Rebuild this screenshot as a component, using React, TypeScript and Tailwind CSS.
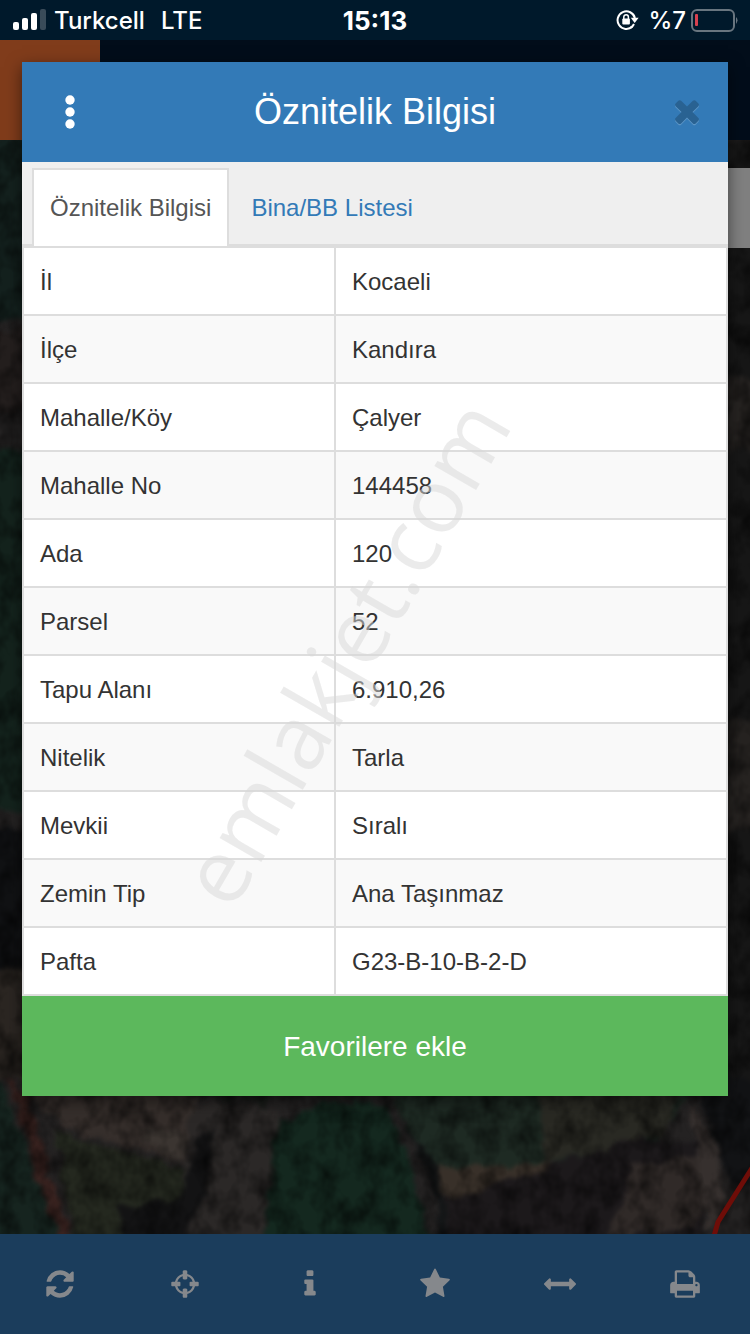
import { useState } from 'react';

const rows = [
  { label: 'İl', value: 'Kocaeli' },
  { label: 'İlçe', value: 'Kandıra' },
  { label: 'Mahalle/Köy', value: 'Çalyer' },
  { label: 'Mahalle No', value: '144458' },
  { label: 'Ada', value: '120' },
  { label: 'Parsel', value: '52' },
  { label: 'Tapu Alanı', value: '6.910,26' },
  { label: 'Nitelik', value: 'Tarla' },
  { label: 'Mevkii', value: 'Sıralı' },
  { label: 'Zemin Tip', value: 'Ana Taşınmaz' },
  { label: 'Pafta', value: 'G23-B-10-B-2-D' },
];

const tabs = ['Öznitelik Bilgisi', 'Bina/BB Listesi'];

const tools = [
  {
    label: 'Yenile',
    path: 'M1639 1056q0 5-1 7-64 268-268 434.5t-478 166.5q-146 0-282.5-55t-243.5-157l-129 129q-19 19-45 19t-45-19-19-45v-448q0-26 19-45t45-19h448q26 0 45 19t19 45-19 45l-137 137q71 66 161 102t187 36q134 0 250-65t186-179q11-17 53-117 8-23 30-23h192q13 0 22.5 9.5t9.5 22.5zm25-800v448q0 26-19 45t-45 19h-448q-26 0-45-19t-19-45 19-45l138-138q-148-137-349-137-134 0-250 65t-186 179q-11 17-53 117-8 23-30 23h-199q-13 0-22.5-9.5t-9.5-22.5v-7q65-268 270-434.5t480-166.5q146 0 284 55.5t245 156.5l130-129q19-19 45-19t45 19 19 45z',
  },
  {
    label: 'Konumum',
    path: 'M1325 1024h-109q-26 0-45-19t-19-45v-128q0-26 19-45t45-19h109q-32-108-112.5-188.5t-188.5-112.5v109q0 26-19 45t-45 19h-128q-26 0-45-19t-19-45v-109q-108 32-188.5 112.5t-112.5 188.5h109q26 0 45 19t19 45v128q0 26-19 45t-45 19h-109q32 108 112.5 188.5t188.5 112.5v-109q0-26 19-45t45-19h128q26 0 45 19t19 45v109q108-32 188.5-112.5t112.5-188.5zm339-192v128q0 26-19 45t-45 19h-143q-37 161-154.5 278.5t-278.5 154.5v143q0 26-19 45t-45 19h-128q-26 0-45-19t-19-45v-143q-161-37-278.5-154.5t-154.5-278.5h-143q-26 0-45-19t-19-45v-128q0-26 19-45t45-19h143q37-161 154.5-278.5t278.5-154.5v-143q0-26 19-45t45-19h128q26 0 45 19t19 45v143q161 37 278.5 154.5t154.5 278.5h143q26 0 45 19t19 45z',
  },
  {
    label: 'Bilgi',
    path: 'M1216 1344v128q0 26-19 45t-45 19h-512q-26 0-45-19t-19-45v-128q0-26 19-45t45-19h64v-384h-64q-26 0-45-19t-19-45v-128q0-26 19-45t45-19h384q26 0 45 19t19 45v576h64q26 0 45 19t19 45zm-128-1152v192q0 26-19 45t-45 19h-256q-26 0-45-19t-19-45v-192q0-26 19-45t45-19h256q26 0 45 19t19 45z',
  },
  {
    label: 'Favoriler',
    path: 'M1728 647q0 22-26 48l-363 354 86 500q1 7 1 20 0 21-10.5 35.5t-30.5 14.5q-19 0-40-12l-449-236-449 236q-22 12-40 12-21 0-31.5-14.5t-10.5-35.5q0-6 2-20l86-500-364-354q-25-27-25-48 0-37 56-46l502-73 225-455q19-41 49-41t49 41l225 455 502 73q56 9 56 46z',
  },
  {
    label: 'Ölçüm',
    path: 'M1792 896q0 26-19 45l-256 256q-19 19-45 19t-45-19-19-45v-128h-1024v128q0 26-19 45t-45 19-45-19l-256-256q-19-19-19-45t19-45l256-256q19-19 45-19t45 19 19 45v128h1024v-128q0-26 19-45t45-19 45 19l256 256q19 19 19 45z',
  },
  {
    label: 'Yazdır',
    path: 'M448 1536h896v-256h-896v256zm0-640h896v-384h-160q-40 0-68-28t-28-68v-160h-640v640zm1152 64q0-26-19-45t-45-19-45 19-19 45 19 45 45 19 45-19 19-45zm128 0v416q0 13-9.5 22.5t-22.5 9.5h-224v160q0 40-28 68t-68 28h-960q-40 0-68-28t-28-68v-160h-224q-13 0-22.5-9.5t-9.5-22.5v-416q0-79 56.5-135.5t135.5-56.5h64v-544q0-40 28-68t68-28h672q40 0 88 20t76 48l152 152q28 28 48 76t20 88v256h64q79 0 135.5 56.5t56.5 135.5z',
  },
];

const closePath =
  'M1490 1322q0 40-28 68l-136 136q-28 28-68 28t-68-28l-294-294-294 294q-28 28-68 28t-68-28l-136-136q-28-28-28-68t28-68l294-294-294-294q-28-28-28-68t28-68l136-136q28-28 68-28t68 28l294 294 294-294q28-28 68-28t68 28l136 136q28 28 28 68t-28 68l-294 294 294 294q28 28 28 68z';

function StatusBar() {
  return (
    <div className="grid h-10 grid-cols-3 items-center bg-[#00192b] px-3 font-[Inter,sans-serif] text-2xl text-white">
      <div className="flex items-center gap-2 font-medium">
        <svg width="34" height="22" viewBox="0 0 34 22" fill="#fff">
          <rect x="1" y="13" width="6" height="8" rx="2" />
          <rect x="10" y="9" width="6" height="12" rx="2" />
          <rect x="19" y="4" width="6" height="17" rx="2" />
          <rect x="28" y="0" width="6" height="21" rx="2" fill="#394b59" />
        </svg>
        <span className="pt-[2px]">Turkcell</span>
        <span className="ml-2 pt-[2px]">LTE</span>
      </div>
      <div className="pt-[2px] text-center text-[26px] leading-8 font-bold">15:13</div>
      <div className="flex items-center justify-end gap-1 font-medium">
        <svg className="mr-1" width="24" height="22" viewBox="0 0 24 22">
          <path d="M16.4 17.6A8.8 8.8 0 1 1 18.9 9" fill="none" stroke="#fff" strokeWidth="2" />
          <path d="M14.5 18.8A8.8 8.8 0 0 0 18 15" fill="none" stroke="#fff" strokeWidth="2" />
          <path d="M14.8 8.8h7.8L18.7 14z" fill="#fff" />
          <rect x="6.3" y="9.5" width="7.6" height="6" rx="1" fill="#fff" />
          <path d="M7.8 10V8a2.3 2.3 0 0 1 4.6 0v2" fill="none" stroke="#fff" strokeWidth="1.5" />
        </svg>
        <span className="pt-[2px]">%7</span>
        <svg width="48" height="24" viewBox="0 0 48 24">
          <rect x="2" y="2" width="42" height="21" rx="5" fill="none" stroke="#68757f" strokeWidth="2" />
          <rect x="5" y="6" width="3" height="12" rx="1" fill="#d8414f" />
          <path d="M46 9q3 3 0 7z" fill="#68757f" />
        </svg>
      </div>
    </div>
  );
}

// Dimmed aerial view behind the dialog
function MapView() {
  return (
    <svg
      className="absolute inset-0 h-full w-full"
      viewBox="0 140 750 1094"
      preserveAspectRatio="xMidYMax slice"
      aria-hidden="true"
    >
      <defs>
        <filter id="soft" x="-5%" y="-5%" width="110%" height="110%" colorInterpolationFilters="sRGB">
          <feTurbulence type="fractalNoise" baseFrequency="0.06" numOctaves="3" seed="4" result="n" />
          <feDisplacementMap in="SourceGraphic" in2="n" scale="16" xChannelSelector="R" yChannelSelector="G" />
          <feGaussianBlur stdDeviation="2" />
        </filter>
        <filter id="grain" colorInterpolationFilters="sRGB">
          <feTurbulence type="fractalNoise" baseFrequency="0.05 0.04" numOctaves="3" seed="8" />
          <feColorMatrix values="0 0 0 0 0  0 0 0 0 0  0 0 0 0 0  1.6 0 0 0 -0.6" />
        </filter>
      </defs>
      <rect y="140" width="750" height="1094" fill="#242222" />
      <g filter="url(#soft)">
        <path d="M-20 140h60v180h-60z" fill="#14211e" />
        <path d="M-20 330h60v80h-60z" fill="#241f1e" />
        <path d="M-20 450h60v360h-60z" fill="#14231d" />
        <path d="M-20 830h60v140h-60z" fill="#111214" />
        <path d="M-20 970h60v110h-60z" fill="#2b2622" />
        <path d="M710 140h60v1000h-60z" fill="#171717" />
        <path d="M715 380h55v70h-55zM715 720h55v110h-55z" fill="#262321" />
        <path d="M-20 1070l20 10 60 164h-80z" fill="#16241f" />
        <path d="M20 1085h180l-4 80-130-36z" fill="#352e2b" />
        <path d="M55 1130l135 42-12 72H76z" fill="#24281f" />
        <path d="M8 1080l18 10 46 154H58z" fill="#38221f" />
        <path d="M145 1125l60 14-12 28-50-24z" fill="#3b3531" />
        <path d="M190 1120l20-20 70 10-18 134h-84z" fill="#2b2827" />
        <path d="M278 1120l50-18h60l46 142H262z" fill="#14281f" />
        <path d="M385 1085h310l-40 60-110 30H430z" fill="#1e2a23" />
        <path d="M540 1090l145-6-20 50-120 30z" fill="#292923" />
        <path d="M430 1168l160-6-70 34h-78z" fill="#383029" />
        <path d="M440 1200l190-60 80 0-10 104H442z" fill="#1c191b" />
        <path d="M632 1165l70-10 14 30-20 40-90 14z" fill="#302a28" />
        <path d="M690 1100l30 50 5 60-18 24-10-80z" fill="#36302e" />
        <path d="M694 1080h76v104h-38l-14-40z" fill="#121315" />
        <path d="M120 1205l60-5 22-70h12l-8 60-22 54h-60z" fill="#131314" />
        <path d="M400 1120l18 30 20 48-2 46h14l-8-70z" fill="#141617" />
        <path d="M190 1086h80v24l-20-10-60-4z" fill="#171a17" />
      </g>
      <rect y="140" width="750" height="1094" filter="url(#grain)" opacity="0.7" />
      <path d="M752 1168l-34 54-4 14" fill="none" stroke="#6e0d08" strokeWidth="5" />
    </svg>
  );
}

function Toolbar() {
  return (
    <nav className="flex h-[100px] items-center justify-between bg-[#1b3d5c] pr-[5px]">
      {tools.map((tool) => (
        <button
          key={tool.label}
          type="button"
          aria-label={tool.label}
          className="flex h-full w-[120px] items-center justify-center text-[#85888c]"
        >
          <svg width="32" height="32" viewBox="0 0 1792 1792" fill="currentColor">
            <path d={tool.path} />
          </svg>
        </button>
      ))}
    </nav>
  );
}

function AttributeDialog() {
  const [active, setActive] = useState(0);

  return (
    <section
      role="dialog"
      aria-labelledby="dialog-title"
      className="relative overflow-hidden bg-white shadow-[0_5px_15px_rgba(0,0,0,0.5)]"
    >
      <header className="flex h-[100px] items-center justify-between bg-[#337ab7] px-3 text-white">
        <button type="button" aria-label="Menü" className="flex w-[72px] justify-center">
          <svg width="12" height="36" viewBox="0 0 12 36" fill="currentColor">
            <circle cx="6" cy="6" r="4.7" />
            <circle cx="6" cy="18" r="4.7" />
            <circle cx="6" cy="30" r="4.7" />
          </svg>
        </button>
        <h1 id="dialog-title" className="text-4xl">
          Öznitelik Bilgisi
        </h1>
        <button type="button" aria-label="Kapat" className="flex w-[72px] justify-end pr-[11px] text-[#296292]">
          <svg width="36" height="36" viewBox="0 60 1792 1792" fill="currentColor">
            <path d={closePath} transform="translate(0 60)" fill="#5c95c5" />
            <path d={closePath} />
          </svg>
        </button>
      </header>

      <div role="tablist" className="flex border-b-2 border-[#ddd] bg-[#efefef] px-[10px] pt-[6px]">
        {tabs.map((tab, index) => (
          <button
            key={tab}
            type="button"
            role="tab"
            aria-selected={active === index}
            onClick={() => setActive(index)}
            className={
              active === index
                ? '-mb-[2px] mr-1 h-[78px] border-2 border-b-0 border-[#ddd] bg-white px-4 text-[#555]'
                : '-mb-[2px] mr-1 h-[78px] border-2 border-b-0 border-transparent px-4 text-[#337ab7]'
            }
          >
            {tab}
          </button>
        ))}
      </div>

      <table className="w-full table-fixed border-collapse text-[#333]">
        <colgroup>
          <col className="w-[312px]" />
          <col />
        </colgroup>
        <tbody>
          {rows.map((row) => (
            <tr key={row.label} className="h-[68px] odd:bg-white even:bg-[#f9f9f9]">
              <th scope="row" className="border-2 border-[#ddd] px-4 pt-[2px] text-left font-normal">
                {row.label}
              </th>
              <td className="border-2 border-[#ddd] px-4 pt-[2px]">{row.value}</td>
            </tr>
          ))}
        </tbody>
      </table>

      <button type="button" className="h-[100px] w-full bg-[#5cb85c] pt-[2px] text-[28px] text-white">
        Favorilere ekle
      </button>

      {/* Watermark */}
      <div className="pointer-events-none absolute inset-0 flex items-center justify-center pt-36 pr-16">
        <span className="-rotate-60 font-['Open_Sans',sans-serif] text-[90px] text-[#d9d9d9] opacity-50">
          emlakjet.com
        </span>
      </div>
    </section>
  );
}

export default function App() {
  return (
    <div className="grid min-h-screen bg-black font-['Liberation_Sans',Arial,sans-serif] text-2xl">
      <div className="col-start-1 row-start-1 flex flex-col">
        <StatusBar />
        <div className="h-[100px] bg-[#020d1a]">
          <div className="h-full w-[100px] bg-[#803c1b]" />
        </div>
        <main className="relative flex-1 overflow-hidden">
          <MapView />
          <div className="absolute right-0 top-7 h-20 w-20 bg-[#808080]" />
        </main>
        <Toolbar />
      </div>
      <div className="z-10 col-start-1 row-start-1 self-start px-[22px] pb-[138px] pt-[62px]">
        <AttributeDialog />
      </div>
    </div>
  );
}
